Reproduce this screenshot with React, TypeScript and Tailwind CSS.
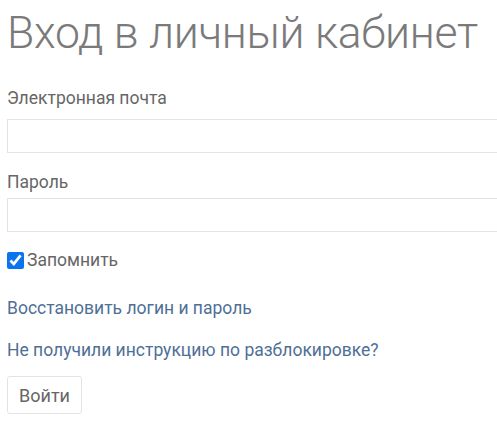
export default function App() {
  return (
    <div className="min-h-[426px] w-[497px] overflow-hidden bg-white font-['Roboto',sans-serif] text-[#555]">
      <div className="w-[540px] pl-[7px]">
        <h1 className="pt-[5px] text-[44.5px] font-light leading-[56px] tracking-[-0.3px] text-[#7a7a7a]">Вход в личный кабинет</h1>
        <form className="mt-[26px]">
          <label className="block text-[17.5px] leading-[22px] text-[#666]">Электронная почта</label>
          <input type="email" className="mt-[10px] block h-[34px] w-full border border-[#e3e3e3] bg-white px-3" />
          <label className="mt-[18px] block text-[17.5px] leading-[22px] text-[#666]">Пароль</label>
          <input type="password" className="mt-[5px] block h-[34px] w-full border border-[#e3e3e3] bg-white px-3" />
          <label className="mt-[17px] flex items-center text-[17.5px] leading-[22px] text-[#666]">
            <input type="checkbox" defaultChecked className="m-0 h-[17px] w-[17px] accent-[#0a74ef]" />
            <span className="ml-[3px]">Запомнить</span>
          </label>
          <div className="mt-[26px] flex flex-col gap-[20px] text-[17.5px] leading-[22px] text-[#4e6f96]">
            <a href="#">Восстановить логин и пароль</a>
            <a href="#">Не получили инструкцию по разблокировке?</a>
          </div>
          <button type="button" className="mt-[15px] h-[38px] w-[75px] rounded-[3px] border border-[#e3e3e3] bg-white text-[18px] text-[#666]">
            Войти
          </button>
        </form>
      </div>
    </div>
  );
}
